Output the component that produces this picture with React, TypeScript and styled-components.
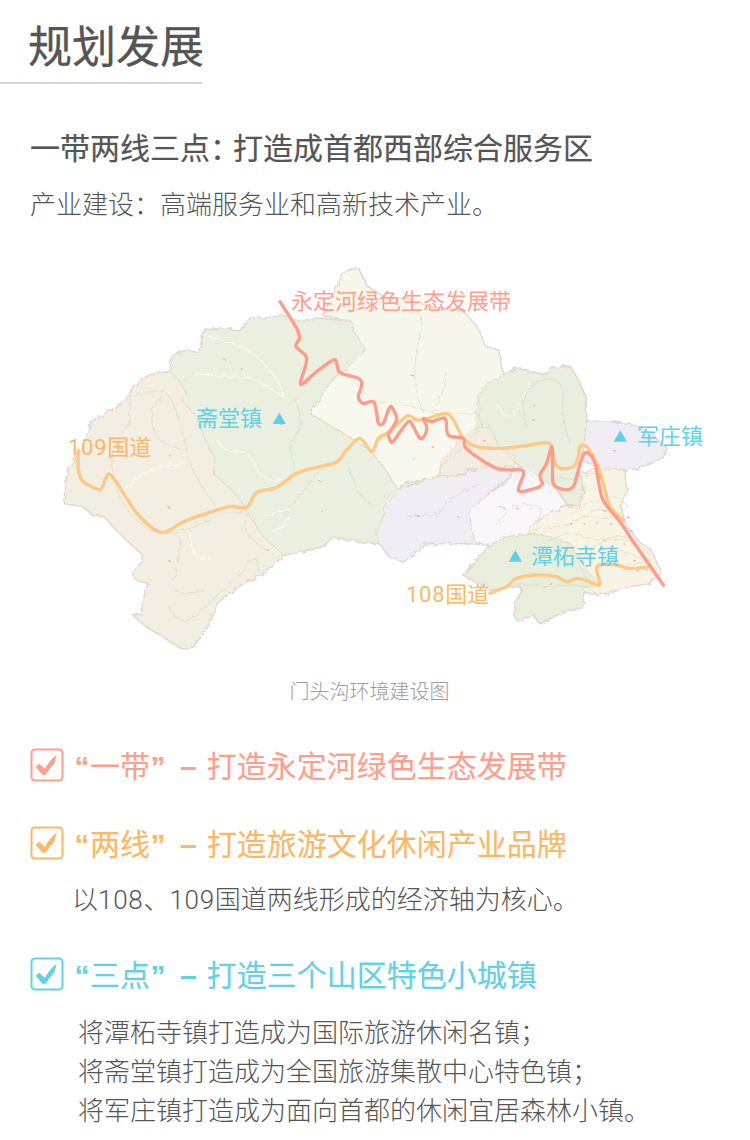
import React from "react";
import styled, { createGlobalStyle } from "styled-components";

const Global = createGlobalStyle`
  html, body { margin: 0; padding: 0; background: #fff; }
  body { font-family: "Noto Sans CJK SC", "Liberation Sans", sans-serif; color: #555; }
`;

const Page = styled.div`
  width: 750px;
  height: 1140px;
  overflow: hidden;
  background: #fff;
`;
const TitleBlock = styled.div`
  width: 202px;
  padding-top: 13px;
  height: 69px;
  border-bottom: 2px solid #d6d6d6;
`;
const Title = styled.h1`
  margin: 0 0 0 28px;
  font-size: 44px;
  line-height: 62px;
  font-weight: 400;
  -webkit-text-stroke: 0.3px #555;
  color: #555;
  white-space: nowrap;
`;
const Intro = styled.div`
  padding: 42px 0 0 30px;
`;
const Subtitle = styled.h2`
  margin: 0;
  font-size: 30px;
  line-height: 40px;
  font-weight: 400;
  -webkit-text-stroke: 0.2px #555;
  color: #555;
`;
const Colon = styled.span`
  letter-spacing: -8px;
  margin-right: 1px;
`;
const Lead = styled.p`
  margin: 17px 0 0;
  font-size: 26px;
  line-height: 40px;
  font-weight: 300;
  color: #555;
`;
const MapBox = styled.div`
  position: relative;
  margin-top: 27px;
  height: 420px;
`;
const MapSvg = styled.svg`
  display: block;
  margin-left: 50px;
  width: 700px;
  height: 420px;
`;
const MapLabel = styled.span<{ $x: number; $y: number; $c: string }>`
  position: absolute;
  left: ${(p) => p.$x}px;
  top: ${(p) => p.$y - 250 - 15}px;
  font-family: "Roboto", "Noto Sans CJK SC", sans-serif;
  font-size: 22px;
  line-height: 32px;
  white-space: nowrap;
  color: ${(p) => p.$c};
`;
const Num = styled.span`
  letter-spacing: 0.7px;
`;
const Caption = styled.div`
  margin-top: 6px;
  text-align: center;
  padding-right: 11px;
  font-size: 20px;
  line-height: 30px;
  font-weight: 300;
  color: #9c9c9c;
`;
const Section = styled.section<{ $top: number }>`
  margin-top: ${(p) => p.$top}px;
  padding-left: 30px;
`;
const Head = styled.div<{ $c: string }>`
  display: flex;
  align-items: center;
  gap: 10px;
  height: 34px;
  color: ${(p) => p.$c};
  -webkit-text-stroke: 0.15px ${(p) => p.$c};
  font-size: 30px;
  line-height: 34px;
  white-space: nowrap;
`;
const Quote = styled.span`
  font-family: "Liberation Sans", sans-serif;
  font-weight: 700;
  display: inline-block;
  width: 16px;
  text-align: center;
`;
const Dash = styled.span`
  font-family: "Liberation Sans", sans-serif;
  font-weight: 700;
  margin: 0 10px 0 14px;
`;
const CheckSvg = styled.svg`
  flex: none;
  display: block;
  width: 34px;
  height: 34px;
`;
const Note = styled.p<{ $indent: number; $top: number }>`
  margin: ${(p) => p.$top}px 0 0 ${(p) => p.$indent}px;
  font-family: "Roboto", "Noto Sans CJK SC", sans-serif;
  font-size: 26px;
  line-height: 39px;
  font-weight: 300;
  color: #555;
  white-space: nowrap;
`;

type Pt = [number, number];
const spline = (p: Pt[], closed = false, t = 0.5) => {
  const n = p.length;
  const at = (i: number) => (closed ? p[(i + n) % n] : p[Math.max(0, Math.min(n - 1, i))]);
  let d = `M${p[0][0]},${p[0][1]}`;
  const end = closed ? n : n - 1;
  for (let i = 0; i < end; i++) {
    const a = at(i - 1), b = at(i), c = at(i + 1), e = at(i + 2);
    const c1: Pt = [b[0] + ((c[0] - a[0]) * t) / 3, b[1] + ((c[1] - a[1]) * t) / 3];
    const c2: Pt = [c[0] - ((e[0] - b[0]) * t) / 3, c[1] - ((e[1] - b[1]) * t) / 3];
    d += `C${c1[0].toFixed(1)},${c1[1].toFixed(1)} ${c2[0].toFixed(1)},${c2[1].toFixed(1)} ${c[0]},${c[1]}`;
  }
  return closed ? d + "Z" : d;
};
const poly = (p: Pt[]) => "M" + p.map((q) => q.join(",")).join("L") + "Z";
const z3 = (p: Pt[]): Pt[] => p.map(([x, y]) => [x + 960, y]);

const regions: { c: string; p: Pt[] }[] = [
  { c: "#f3eee2", p: [[360,365],[300,375],[250,410],[235,445],[200,470],[170,490],[125,515],[110,560],[85,615],[60,650],[45,700],[45,760],[100,770],[130,795],[165,800],[190,830],[230,870],[275,910],[280,935],[250,960],[255,985],[295,1000],[280,1050],[275,1095],[250,1095],[290,1130],[340,1160],[395,1195],[430,1190],[470,1135],[500,1060],[530,1035],[580,1000],[650,965],[700,915],[640,860],[590,785],[575,755],[545,720],[490,670],[495,630],[465,570],[440,500],[395,450],[410,430],[380,385]] },
  { c: "#ebefdf", p: [[360,365],[365,320],[410,300],[445,310],[465,240],[530,235],[575,245],[600,205],[660,205],[700,195],[740,215],[800,205],[905,215],[915,250],[945,295],[920,330],[885,360],[850,385],[780,490],[880,550],[960,600],[1000,650],[1045,720],[1005,770],[1000,800],[980,850],[985,880],[900,870],[850,860],[815,890],[730,910],[700,915],[640,860],[590,785],[575,755],[545,720],[490,670],[495,630],[465,570],[440,500],[395,450],[410,430],[380,385]] },
  { c: "#f7f6ea", p: [[780,490],[850,385],[885,360],[945,295],[915,250],[905,215],[820,195],[885,65],[925,55],[950,110],[1020,150],[1060,145],[1140,170],[1240,185],[1280,230],[1305,290],[1345,300],[1355,360],[1360,375],[1310,400],[1285,435],[1295,530],[1220,610],[1170,650],[1170,680],[1060,700],[1045,720],[1000,650],[960,600],[880,550]] },
  { c: "#f9f8ee", p: [[780,490],[850,385],[885,360],[960,450],[1090,470],[1150,490],[1285,490],[1295,530],[1220,610],[1170,650],[1170,680],[1060,700],[1045,720],[1000,650],[960,600],[880,550]] },
  { c: "#eaeede", p: z3([[325,435],[350,400],[400,375],[440,355],[520,375],[545,355],[600,350],[630,400],[645,440],[650,510],[640,590],[625,660],[640,730],[625,770],[590,760],[560,710],[500,690],[440,640],[385,590],[360,530],[315,535]]) },
  { c: "#f3ede1", p: z3([[315,535],[360,530],[385,590],[435,620],[430,650],[345,650],[290,660],[260,680],[210,680],[210,640],[260,580],[290,555]]) },
  { c: "#f1edf5", p: z3([[650,515],[720,515],[790,525],[840,550],[890,595],[880,620],[840,640],[800,655],[760,660],[700,660],[640,630],[640,590]]) },
  { c: "#f1edf5", p: z3([[90,715],[210,680],[260,680],[345,650],[430,650],[420,680],[340,740],[295,785],[315,880],[260,880],[170,880],[100,935],[60,920],[25,875],[20,840],[40,800],[45,745]]) },
  { c: "#fbf6fa", p: z3([[430,655],[470,655],[520,690],[560,720],[590,765],[520,800],[480,830],[480,850],[410,860],[360,885],[315,880],[295,785],[340,745],[420,690]]) },
  { c: "#f7f4e6", p: z3([[480,830],[520,800],[590,770],[625,770],[645,730],[630,670],[700,655],[760,660],[770,720],[750,770],[770,830],[810,880],[840,900],[870,960],[870,970],[840,1000],[770,1010],[715,1030],[640,1030],[650,990],[600,880],[540,860],[480,850]]) },
  { c: "#e9eddb", p: z3([[360,885],[410,860],[480,850],[540,860],[600,880],[650,960],[690,1000],[640,1015],[640,1075],[580,1085],[510,1120],[490,1095],[445,1115],[430,1090],[440,1050],[460,1020],[440,1005],[360,1020],[280,975],[330,920]]) },
];

const road109: Pt[] = [[85,600],[85,660],[100,695],[150,718],[165,690],[178,672],[205,705],[265,795],[335,847],[400,815],[470,790],[540,770],[590,772],[620,728],[680,712],[740,670],[800,652],[860,636],[890,600],[930,565],[965,605],[985,565],[1010,550],[1045,520],[1075,497],[1100,510],[1125,508],[1185,490],[1210,510],[1240,565],[1280,590],[1360,595],[1440,585],[1500,580],[1512,630],[1530,655],[1570,650],[1585,620],[1590,590],[1610,590],[1640,640],[1660,700],[1680,770],[1720,810]];
const road108: Pt[] = z3([[360,1030],[410,1010],[440,985],[500,975],[560,980],[590,995],[625,985],[670,1000],[690,1003],[680,960],[690,945],[740,945],[780,955],[840,950]]);
const river: Pt[] = [[690,155],[740,235],[748,265],[738,290],[770,325],[752,395],[760,400],[800,365],[850,330],[860,340],[870,368],[925,385],[935,405],[925,440],[940,460],[970,455],[980,490],[985,520],[1000,520],[1015,480],[1025,470],[1035,490],[1040,510],[1020,545],[1015,555],[1025,578],[1040,560],[1075,515],[1090,530],[1110,565],[1125,555],[1130,530],[1120,505],[1145,515],[1185,505],[1195,555],[1240,565],[1245,590],[1280,620],[1340,655],[1380,660],[1415,660],[1420,675],[1405,720],[1430,722],[1475,705],[1470,675],[1490,640],[1505,590],[1508,640],[1510,700],[1540,718],[1570,710],[1585,660],[1600,615],[1615,610],[1635,640],[1655,740],[1680,780],[1710,815],[1760,890],[1840,1005]];

const whiteRoads: Pt[][] = [
  [[480,262],[560,285],[620,320],[680,390],[700,440],[660,415],[600,385],[520,380],[440,370],[420,390]],
  [[500,570],[530,600],[590,610],[640,680],[700,690]],
  [[640,800],[720,780],[700,830],[670,840],[690,850]],
  [[220,720],[300,660],[400,640]],
  [[420,850],[440,920],[480,925]],
  [[1340,460],[1380,500],[1440,400]],
];
const tanRoads: Pt[][] = [
  [[240,440],[350,430],[400,560],[420,640],[470,730],[500,770]],
  [[240,440],[235,520],[190,600],[190,680],[215,750],[260,810],[330,850],[420,835],[520,790],[590,790]],
  [[340,440],[305,490],[330,570],[400,600]],
  [[590,790],[590,850],[650,900]],
  [[390,860],[380,960],[370,1010],[400,1030],[460,1020]],
  [[355,1070],[410,1110],[540,1000],[610,925],[630,965]],
  [[735,440],[750,520],[720,590],[730,640],[720,700]],
  [[895,640],[920,720],[970,770]],
  [[700,800],[730,760],[820,650]],
  [[1085,170],[1115,210],[1100,300],[1095,400],[1120,490]],
  [[1190,370],[1170,450],[1140,490]],
  [[1430,540],[1420,470],[1450,400],[1530,400],[1540,500],[1560,580]],
  [[1070,800],[1160,790],[1210,740],[1290,700]],
  [[1340,830],[1390,770],[1470,775],[1450,850]],
  [[1450,840],[1560,820],[1640,780],[1720,800]],
  [[1480,880],[1560,850],[1640,870],[1720,860],[1780,900]],
  [[1400,1000],[1500,1010],[1600,1010],[1650,1040]],
  [[1640,940],[1700,900],[1780,930]],
  [[1560,790],[1620,760],[1690,740],[1730,770],[1680,800],[1600,800]],
  [[1620,900],[1680,870],[1760,880],[1800,930],[1720,950]],
  [[1520,680],[1580,690],[1620,670],[1660,680]],
];
const dots: Pt[] = [[355,612],[355,772],[355,932],[520,325],[570,355],[690,520],[805,690],[815,785],[650,898],[1078,372],[1088,625],[1085,375],[1145,590],[1300,570],[1450,510],[1540,515],[1450,465],[1690,600],[1100,795],[1160,795],[1220,795],[1360,775],[1400,775],[1440,775],[1560,820],[1600,820],[1640,820],[1660,870],[1720,880],[1740,840],[1690,930],[1500,1000],[1660,780],[1700,790],[1680,820],[1730,800],[1750,930],[1620,905],[1790,960],[1760,960],[1350,770],[1470,775]];

const Check = ({ c }: { c: string }) => (
  <CheckSvg viewBox="0 0 34 34" aria-hidden="true">
    <rect x="1.5" y="1.5" width="31" height="31" rx="3.5" fill="none" stroke={c} strokeWidth="2" />
    <path d="M5.7 19 L9 15.7 L15 20.7 C18 15 22 10 26.7 6.7 L24.3 15.7 C21 19 18 23 15.7 26.7 L12.3 26.7 Z" fill={c} />
  </CheckSvg>
);

const Tri = ({ x, y }: { x: number; y: number }) => (
  <path d={`M${x - 20},${y + 17} L${x + 20},${y + 17} L${x},${y - 17}Z`} fill="#5fcfe6" />
);

const RED = "#fe9f8e";
const ORANGE = "#fab866";
const CYAN = "#62d1e6";

export default function App() {
  return (
    <Page>
      <Global />
      <TitleBlock>
        <Title>规划发展</Title>
      </TitleBlock>
      <Intro>
        <Subtitle>一带两线三点<Colon>：</Colon>打造成首都西部综合服务区</Subtitle>
        <Lead>产业建设：高端服务业和高新技术产业。</Lead>
      </Intro>
      <MapBox>
        <MapSvg viewBox="0 0 2100 1260" aria-hidden="true">
          <defs>
            <filter id="rough" x="-5%" y="-5%" width="110%" height="110%" colorInterpolationFilters="sRGB">
              <feTurbulence type="fractalNoise" baseFrequency="0.06" numOctaves="2" seed="4" result="n" />
              <feDisplacementMap in="SourceGraphic" in2="n" scale="16" />
              <feGaussianBlur stdDeviation="0.8" />
            </filter>
          </defs>
          <g filter="url(#rough)">
            {regions.map((r, i) => (
              <path key={i} d={poly(r.p)} fill="#e6d2dd" stroke="#e6d2dd" strokeWidth="7" strokeLinejoin="round" />
            ))}
            {regions.map((r, i) => (
              <path key={i} d={poly(r.p)} fill={r.c} />
            ))}
            {regions.map((r, i) => (
              <path key={i} d={poly(r.p)} fill="none" stroke="#d5d9b6" strokeWidth="2" opacity="0.7" />
            ))}
            {tanRoads.map((p, i) => (
              <path key={i} d={spline(p)} fill="none" stroke="#d6d1b2" strokeWidth="1.6" />
            ))}
            {whiteRoads.map((p, i) => (
              <path key={i} d={spline(p)} fill="none" stroke="#fdfdf8" strokeWidth="3" />
            ))}
            {dots.map(([x, y], i) => (
              <rect key={i} x={x} y={y} width="7" height="4" fill="#d9b6b8" />
            ))}
          </g>
          <path d={spline(road109)} fill="none" stroke="#fec885" strokeWidth="10" strokeLinecap="round" strokeLinejoin="round" />
          <path d={spline(road108)} fill="none" stroke="#fec885" strokeWidth="10" strokeLinecap="round" strokeLinejoin="round" />
          <path d={spline(river)} fill="none" stroke="#fe9c8a" strokeWidth="10" strokeLinecap="round" strokeLinejoin="round" />
          <Tri x={688} y={505} />
          <Tri x={1711} y={558} />
          <Tri x={1396} y={918} />
        </MapSvg>
        <MapLabel $x={291} $y={301} $c={RED}>永定河绿色生态发展带</MapLabel>
        <MapLabel $x={196} $y={418} $c={CYAN}>斋堂镇</MapLabel>
        <MapLabel $x={68} $y={447} $c={ORANGE}><Num>109</Num>国道</MapLabel>
        <MapLabel $x={637} $y={436} $c={CYAN}>军庄镇</MapLabel>
        <MapLabel $x={531} $y={556} $c={CYAN}>潭柘寺镇</MapLabel>
        <MapLabel $x={406} $y={594} $c={ORANGE}><Num>108</Num>国道</MapLabel>
      </MapBox>
      <Caption>门头沟环境建设图</Caption>
      <Section $top={42}>
        <Head $c={RED}>
          <Check c={RED} />
          <span><Quote>“</Quote>一带<Quote>”</Quote><Dash>–</Dash>打造永定河绿色生态发展带</span>
        </Head>
      </Section>
      <Section $top={44}>
        <Head $c={ORANGE}>
          <Check c={ORANGE} />
          <span><Quote>“</Quote>两线<Quote>”</Quote><Dash>–</Dash>打造旅游文化休闲产业品牌</span>
        </Head>
        <Note $indent={42} $top={21}>以<Num>108</Num>、<Num>109</Num>国道两线形成的经济轴为核心。</Note>
      </Section>
      <Section $top={37}>
        <Head $c={CYAN}>
          <Check c={CYAN} />
          <span><Quote>“</Quote>三点<Quote>”</Quote><Dash>–</Dash>打造三个山区特色小城镇</span>
        </Head>
        <Note $indent={48} $top={23}>将潭柘寺镇打造成为国际旅游休闲名镇；</Note>
        <Note $indent={48} $top={0}>将斋堂镇打造成为全国旅游集散中心特色镇；</Note>
        <Note $indent={48} $top={0}>将军庄镇打造成为面向首都的休闲宜居森林小镇。</Note>
      </Section>
    </Page>
  );
}
